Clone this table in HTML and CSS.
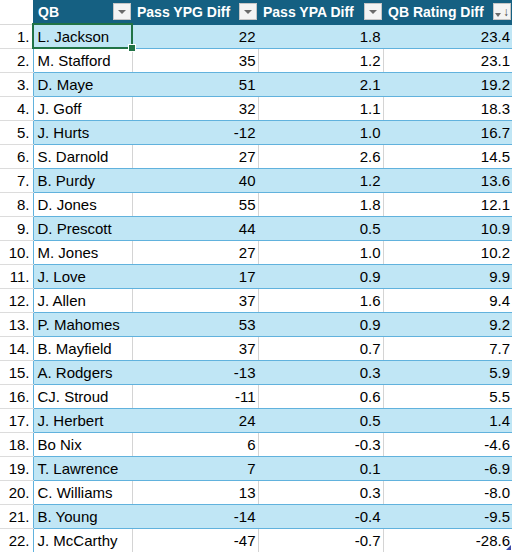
FILE: index.html
```html
<!DOCTYPE html>
<html lang="en">
<head>
  <meta charset="UTF-8" />
  <title>QB Diff</title>
  <link rel="stylesheet" href="styles.css">
</head>
<body>
  <table class="sheet">
    <colgroup>
      <col class="c-rn"><col class="c-qb"><col class="c-ypg"><col class="c-ypa"><col class="c-rate">
    </colgroup>
    <thead>
      <tr>
        <th class="rn"></th>
        <th><div class="head">QB <span class="filter"><i class="tri"></i></span></div></th>
        <th><div class="head">Pass YPG Diff <span class="filter"><i class="tri"></i></span></div></th>
        <th><div class="head">Pass YPA Diff <span class="filter"><i class="tri"></i></span></div></th>
        <th><div class="head">QB Rating Diff <span class="filter sorted"><i class="tri"></i><b class="arrow">↓</b></span></div></th>
      </tr>
    </thead>
    <tbody id="rows"></tbody>
  </table>

  <script>
    const data = [
      ["L. Jackson", 22, "1.8", "23.4"],
      ["M. Stafford", 35, "1.2", "23.1"],
      ["D. Maye", 51, "2.1", "19.2"],
      ["J. Goff", 32, "1.1", "18.3"],
      ["J. Hurts", -12, "1.0", "16.7"],
      ["S. Darnold", 27, "2.6", "14.5"],
      ["B. Purdy", 40, "1.2", "13.6"],
      ["D. Jones", 55, "1.8", "12.1"],
      ["D. Prescott", 44, "0.5", "10.9"],
      ["M. Jones", 27, "1.0", "10.2"],
      ["J. Love", 17, "0.9", "9.9"],
      ["J. Allen", 37, "1.6", "9.4"],
      ["P. Mahomes", 53, "0.9", "9.2"],
      ["B. Mayfield", 37, "0.7", "7.7"],
      ["A. Rodgers", -13, "0.3", "5.9"],
      ["CJ. Stroud", -11, "0.6", "5.5"],
      ["J. Herbert", 24, "0.5", "1.4"],
      ["Bo Nix", 6, "-0.3", "-4.6"],
      ["T. Lawrence", 7, "0.1", "-6.9"],
      ["C. Williams", 13, "0.3", "-8.0"],
      ["B. Young", -14, "-0.4", "-9.5"],
      ["J. McCarthy", -47, "-0.7", "-28.6"]
    ];
    const tbody = document.getElementById("rows");
    data.forEach((r, i) => {
      const tr = document.createElement("tr");
      if (i % 2 === 0) tr.className = "band";
      tr.innerHTML =
        '<td class="rn">' + (i + 1) + '.</td>' +
        '<td class="name">' + r[0] + (i === 0 ? '<span class="sel"><i class="grip"></i></span>' : '') + '</td>' +
        '<td class="num">' + r[1] + '</td>' +
        '<td class="num">' + r[2] + '</td>' +
        '<td class="num last">' + r[3] + (i === data.length - 1 ? '<i class="resize"></i>' : '') + '</td>';
      tbody.appendChild(tr);
    });
  </script>
</body>
</html>
```

FILE: styles.css
```css
body {
  margin: 0;
  background: #fff;
  font-family: "Liberation Sans", Arial, sans-serif;
  font-size: 15px;
  color: #000;
}
.sheet {
  border-collapse: collapse;
  table-layout: fixed;
  width: 512px;
}
.c-rn { width: 33px; }
.c-qb { width: 99px; }
.c-ypg { width: 126px; }
.c-ypa { width: 125px; }
.c-rate { width: 129px; }

th, td {
  height: 24px;
  padding: 0;
  box-sizing: border-box;
  white-space: nowrap;
  overflow: visible;
}
th {
  background: #156082;
  color: #fff;
  font-weight: bold;
  font-size: 14px;
  text-align: left;
  border-bottom: 1px solid #156082;
}
th.rn {
  background: #fff;
  border-bottom: 1px solid #d9d9d9;
}
.head {
  display: flex;
  align-items: center;
  justify-content: space-between;
  padding: 0 1px 0 5px;
}
.filter {
  display: flex;
  align-items: center;
  justify-content: center;
  gap: 2px;
  width: 18px;
  height: 17px;
  box-sizing: border-box;
  background: #f4f4f4;
  border: 1px solid #c6c6c6;
}
.tri {
  width: 0;
  height: 0;
  border-left: 4px solid transparent;
  border-right: 4px solid transparent;
  border-top: 4px solid #6b6b6b;
}
.sorted .tri {
  border-left-width: 3.5px;
  border-right-width: 3.5px;
  margin-top: 6px;
}
.arrow {
  font-weight: normal;
  font-size: 12px;
  color: #444;
  line-height: 1;
}

td {
  border-bottom: 1px solid #61b2dd;
  border-left: 1px solid #d4d4d4;
}
td.rn {
  text-align: right;
  padding-right: 3px;
  border-left: none;
  border-bottom: 1px solid #dcdcdc;
  border-right: 1px solid #61b2dd;
}
td.name {
  padding-left: 4px;
  position: relative;
  border-left: none;
}
td.num {
  text-align: right;
  padding-right: 2px;
}
tr.band td:not(.rn) {
  background: #c0e6f5;
  border-left-color: #c0e6f5;
}
tr:last-child td:not(.rn) {
  border-bottom: 1px solid #4a9fd0;
}
td.last {
  position: relative;
}

.sel {
  position: absolute;
  left: -2px;
  top: -2px;
  right: -1px;
  bottom: -1px;
  border: 2px solid #217346;
}
.grip {
  position: absolute;
  right: -5px;
  bottom: -5px;
  width: 6px;
  height: 6px;
  background: #217346;
  border: 1px solid #fff;
}
.resize {
  position: absolute;
  right: 1px;
  bottom: 2px;
  width: 0;
  height: 0;
  border-left: 5px solid transparent;
  border-bottom: 5px solid #3b4aa8;
}
```
